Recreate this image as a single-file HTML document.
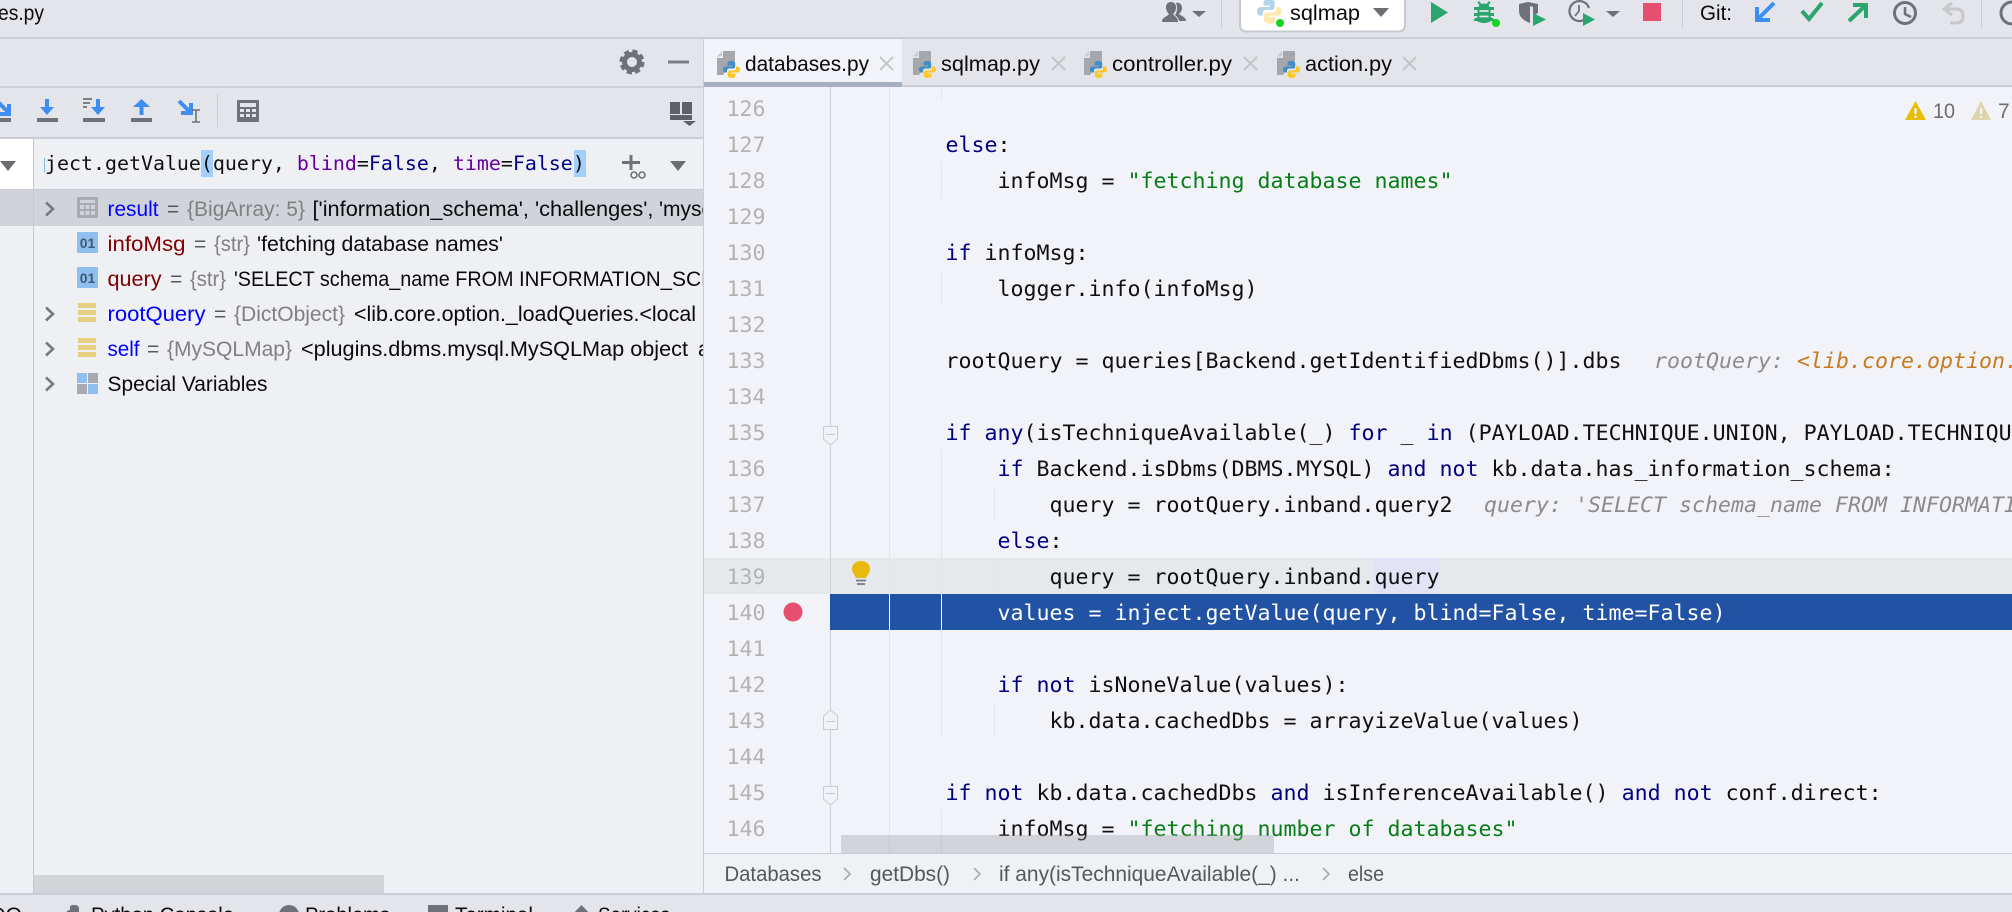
<!DOCTYPE html>
<html><head><meta charset="utf-8"><title>PyCharm</title>
<style>
html,body{margin:0;padding:0;width:2012px;height:912px;overflow:hidden;background:#e4e5ea}
svg{display:block}
text{white-space:pre}
.u{font-family:"Liberation Sans",sans-serif;font-size:21px;fill:#0a0a0a}
.c{font-family:"DejaVu Sans Mono","Liberation Mono",monospace;font-size:21.6px;fill:#101010}
.e{font-family:"DejaVu Sans Mono","Liberation Mono",monospace;font-size:19.93px;fill:#101010}
.n{font-family:"DejaVu Sans Mono","Liberation Mono",monospace;font-size:21.6px;fill:#b3b3b1}
.k{fill:#000080}.s{fill:#067d17}.p{fill:#660099}.h{font-style:italic;fill:#8c8c8c}.o{font-style:italic;fill:#c77a1d}
.g{fill:#808080}.b{fill:#0000ff}.r{fill:#7f0000}.d{fill:#55575c}.m{fill:#55575c;font-size:21px}
</style></head><body>
<svg width="2012" height="912" viewBox="0 0 2012 912" xmlns="http://www.w3.org/2000/svg">
<defs>
<clipPath id="cl"><rect x="0" y="0" width="703" height="912"/></clipPath>
<g id="py"><path fill="#3d8fc6" d="M8.5 0C5 0 4.5 1.2 4.5 2.5V4.5H9V5.5H2.5C1 5.5 0 6.8 0 8.5 0 10.2 1 11.5 2.5 11.5H4V9.8C4 8.5 5 7.5 6.3 7.5H10.2C11.4 7.5 12.2 6.6 12.2 5.5V2.5C12.2 1.2 11 0 8.5 0Z"/><path fill="#fdc727" d="M8.5 17C12 17 12.5 15.8 12.5 14.5V12.5H8V11.5H14.5C16 11.5 17 10.2 17 8.5 17 6.8 16 5.5 14.5 5.5H13V7.2C13 8.5 12 9.5 10.7 9.500H6.8C5.6 9.500 4.8 10.4 4.8 11.5V14.5C4.8 15.8 6 17 8.5 17Z"/></g>
<g id="tabicon"><path fill="#a5a7ac" d="M6 0H18V17H11L6 24H0V7H6Z"/><path fill="#c9cbcf" d="M0 5.5L5 0V5.5Z"/><use href="#py" x="6" y="10"/></g>
<g id="x"><path d="M1 1L14 14M14 1L1 14" stroke="#c3c5c9" stroke-width="2" fill="none"/></g>
<g id="chev"><path d="M0 -6.5L7 0L0 6.5" fill="none" stroke="#77797d" stroke-width="2.6"/></g>
<g id="stack" fill="#e8cf7f"><rect x="0" y="0" width="18" height="5"/><rect x="0" y="7" width="18" height="5"/><rect x="0" y="14" width="18" height="5"/></g>
<g id="bc"><path d="M0 -6L6 0L0 6" fill="none" stroke="#a9abaf" stroke-width="1.6"/></g>
</defs>

<!-- base -->
<rect width="2012" height="912" fill="#e4e5ea"/>
<rect x="0" y="138" width="704" height="756" fill="#eff0f4"/>
<rect x="704" y="87" width="1308" height="767" fill="#f2f3f8"/>
<rect x="704" y="854" width="1308" height="39" fill="#f0f1f5"/>

<!-- top bar -->
<text class="u" x="-2" y="20" textLength="46" lengthAdjust="spacingAndGlyphs">es.py</text>
<rect x="0" y="37" width="2012" height="2" fill="#c9ced6"/>
<path fill="#6e7278" d="M1176 3C1180 2 1182 5 1182 8C1182 11 1180 13 1179 14C1181 16 1186 17 1186 21H1179C1179 18 1176 16 1175 15C1177 12 1178 8 1176 3Z"/>
<path fill="#6e7278" d="M1162 22C1162 17 1167 17 1169 14C1167 12 1166 10 1166 7C1166 4 1168 2 1171 2C1174 2 1176 4 1176 7C1176 10 1175 12 1173 14C1175 17 1178 17 1178 22Z"/>
<path fill="#6e7278" d="M1192 11H1206L1199 17Z"/>
<rect x="1221" y="0" width="1" height="28" fill="#c9ced6"/>
<rect x="1240" y="-6" width="165" height="37.500" rx="6" fill="#fff" stroke="#c4c9d1" stroke-width="2"/>
<g transform="translate(1257 -1) scale(1.45)" opacity=".38"><use href="#py"/></g>
<circle cx="1280" cy="23" r="4" fill="#14d41d"/>
<text class="u" x="1290" y="20" textLength="70" lengthAdjust="spacingAndGlyphs">sqlmap</text>
<path fill="#6b6d71" d="M1373 8H1389L1381 17Z"/>
<path fill="#2aa56d" d="M1431 2L1448 12.500L1431 23Z"/>
<path fill="#2aa56d" d="M1479 1L1481.500 4Q1484 3 1486.500 4L1489 1L1490.500 2.500L1488.500 5.500L1490 7H1494V10H1490.500V13H1494V16H1490.500V17L1494 19V21H1491Q1488 23 1484 23Q1480 23 1477 21H1474V19L1477.500 17V16H1474V13H1477.500V10H1474V7H1478L1479.500 5.500L1477.500 2.500Z"/>
<path d="M1479.500 11H1488.500M1479.500 16.500H1488.500" stroke="#e4e5ea" stroke-width="1.800"/>
<circle cx="1496" cy="23" r="4" fill="#14d41d"/>
<path fill="#6e7278" d="M1519 4L1528 2L1538 4V13L1533 16V7L1530 6V23Q1519 19 1519 11Z"/>
<path fill="#2aa56d" d="M1533 13L1546 19.500L1533 26Z"/>
<path d="M1584 20A10 10 0 1 1 1589 8" fill="none" stroke="#6e7278" stroke-width="2.200"/>
<path d="M1579 5V11L1575 16" fill="none" stroke="#6e7278" stroke-width="1.800"/>
<path fill="#2aa56d" d="M1583 13L1595 19.500L1583 26Z"/>
<path fill="#6e7278" d="M1606 11H1620L1613 17Z"/>
<rect x="1643" y="3" width="18" height="18" fill="#e4506e"/>
<rect x="1682" y="0" width="1" height="28" fill="#c9ced6"/>
<text class="u" x="1700" y="20" textLength="32" lengthAdjust="spacingAndGlyphs">Git:</text>
<path d="M1774 3L1757 20M1757 7V20H1770" fill="none" stroke="#3d8ef0" stroke-width="4"/>
<path d="M1802 11L1809 19L1822 3" fill="none" stroke="#2aa56d" stroke-width="4"/>
<path d="M1849 21L1866 5M1853 5H1866V18" fill="none" stroke="#2aa56d" stroke-width="4"/>
<circle cx="1905" cy="13" r="10.500" fill="none" stroke="#6e7278" stroke-width="3"/>
<path d="M1905 7V14L1911 17" fill="none" stroke="#6e7278" stroke-width="2.600"/>
<path d="M1952 3L1944 9L1952 15M1945 9H1956Q1963 9 1963 16T1956 23H1950" fill="none" stroke="#c7c8ca" stroke-width="3"/>
<rect x="1981" y="0" width="1" height="28" fill="#c9ced6"/>
<circle cx="2012" cy="13" r="11" fill="none" stroke="#6e7278" stroke-width="3"/>

<!-- left panel header -->
<rect x="0" y="86" width="704" height="2" fill="#cbd0d6"/>
<g fill="#6e7278"><circle cx="632" cy="62" r="7.500" fill="none" stroke="#6e7278" stroke-width="5"/><circle cx="632" cy="62" r="10.500" fill="none" stroke="#6e7278" stroke-width="4" stroke-dasharray="5 3.250"/></g>
<rect x="668" y="60.500" width="21" height="3" fill="#7c7e84"/>

<!-- debugger toolbar -->
<path d="M-3 101L9 113M9 104V114H0" fill="none" stroke="#3d8ef0" stroke-width="4"/>
<rect x="0" y="118" width="11" height="4" fill="#6e7278"/>
<rect x="45" y="99" width="4" height="9" fill="#3d8ef0"/><path fill="#3d8ef0" d="M40 107H54L47 115Z"/><rect x="37" y="118" width="21" height="4" fill="#6e7278"/>
<path d="M83 99H92M83 103H90M83 107H87" stroke="#6e7278" stroke-width="1.800"/>
<rect x="96" y="99" width="4" height="9" fill="#3d8ef0"/><path fill="#3d8ef0" d="M91 107H105L98 115Z"/><rect x="83" y="118" width="22" height="4" fill="#6e7278"/>
<rect x="139.500" y="106" width="4" height="9" fill="#3d8ef0"/><path fill="#3d8ef0" d="M133 107H150L141.500 99Z"/><rect x="131" y="118" width="21" height="4" fill="#6e7278"/>
<path d="M179 101L191 113M191 103V113H181" fill="none" stroke="#3d8ef0" stroke-width="4"/>
<path d="M192 110H200M196 110V122M192 122H200" fill="none" stroke="#6e7278" stroke-width="1.600"/>
<rect x="217" y="94" width="1" height="33" fill="#c9ced6"/>
<rect x="237" y="100" width="22" height="22" rx="1" fill="#6e7278"/><rect x="240" y="103" width="16" height="4" fill="#e4e5ea"/>
<g fill="#e4e5ea"><rect x="240" y="109" width="4" height="3"/><rect x="246" y="109" width="4" height="3"/><rect x="252" y="109" width="4" height="3"/><rect x="240" y="114" width="4" height="3"/><rect x="246" y="114" width="4" height="3"/><rect x="252" y="114" width="4" height="3"/></g>
<g fill="#5d6066"><rect x="670" y="102" width="10" height="12"/><rect x="682" y="102" width="10" height="12"/><rect x="670" y="115" width="22" height="5"/><path d="M683 121H696L689.500 126Z"/></g>
<rect x="0" y="137" width="704" height="2" fill="#c9ced6"/>

<!-- watch row -->
<rect x="0" y="139" width="33" height="51" fill="#fff"/>
<path fill="#6b6d71" d="M0 161H16L8 171Z"/>
<rect x="33" y="139" width="1" height="754" fill="#c5c9cf"/>
<rect x="201" y="150" width="12" height="27" fill="#a4cffb"/><rect x="574" y="150" width="12" height="27" fill="#a4cffb"/>
<rect x="44" y="158" width="1" height="14" fill="#7fb9e8"/>
<text class="e" x="45" y="170">ject.getValue(query, <tspan class="p">blind</tspan>=<tspan fill="#000080">False</tspan>, <tspan class="p">time</tspan>=<tspan fill="#000080">False</tspan>)</text>
<path d="M631 155V170M622 162.500H640" stroke="#6e7278" stroke-width="3"/>
<circle cx="634" cy="175" r="3" fill="none" stroke="#6e7278" stroke-width="1.600"/><circle cx="642" cy="175" r="3" fill="none" stroke="#6e7278" stroke-width="1.600"/>
<path fill="#6b6d71" d="M670 161H686L678 171Z"/>
<rect x="0" y="189" width="704" height="2" fill="#c9ced6"/>

<!-- variables -->
<rect x="0" y="190" width="704" height="36" fill="#d0d4da"/>
<rect x="33" y="139" width="1" height="754" fill="#c5c9cf"/>
<g clip-path="url(#cl)">
<use href="#chev" x="46" y="209"/><use href="#chev" x="46" y="314"/><use href="#chev" x="46" y="349"/><use href="#chev" x="46" y="384"/>
<!-- result -->
<rect x="77" y="197" width="21" height="21" rx="1" fill="#a7aab0"/><rect x="80" y="200" width="15" height="3" fill="#d0d4da"/>
<g fill="#d0d4da"><rect x="80" y="205" width="4" height="4"/><rect x="85.500" y="205" width="4" height="4"/><rect x="91" y="205" width="4" height="4"/><rect x="80" y="211" width="4" height="4"/><rect x="85.500" y="211" width="4" height="4"/><rect x="91" y="211" width="4" height="4"/></g>
<text class="u b" x="107.500" y="216" textLength="51" lengthAdjust="spacingAndGlyphs">result</text>
<text class="u d" x="167" y="216">=</text>
<text class="u g" x="187" y="216" textLength="118" lengthAdjust="spacingAndGlyphs">{BigArray: 5}</text>
<text class="u" x="312.500" y="216" textLength="347" lengthAdjust="spacingAndGlyphs">['information_schema', 'challenges', </text>
<text class="u" x="659" y="216">'mysql'</text>
<!-- infoMsg -->
<rect x="77" y="232" width="21" height="21" rx="1" fill="#8fbfee"/>
<text x="87.500" y="248" text-anchor="middle" font-family="'Liberation Sans',sans-serif" font-weight="bold" font-size="14" fill="#3f5a73">01</text>
<text class="u r" x="107.500" y="251" textLength="78" lengthAdjust="spacingAndGlyphs">infoMsg</text>
<text class="u d" x="194" y="251">=</text>
<text class="u g" x="214" y="251" textLength="36" lengthAdjust="spacingAndGlyphs">{str}</text>
<text class="u" x="257" y="251" textLength="246" lengthAdjust="spacingAndGlyphs">'fetching database names'</text>
<!-- query -->
<rect x="77" y="267" width="21" height="21" rx="1" fill="#8fbfee"/>
<text x="87.500" y="283" text-anchor="middle" font-family="'Liberation Sans',sans-serif" font-weight="bold" font-size="14" fill="#3f5a73">01</text>
<text class="u r" x="107.500" y="286" textLength="54" lengthAdjust="spacingAndGlyphs">query</text>
<text class="u d" x="170" y="286">=</text>
<text class="u g" x="190" y="286" textLength="36" lengthAdjust="spacingAndGlyphs">{str}</text>
<text class="u" x="234" y="286" textLength="285" lengthAdjust="spacingAndGlyphs">'SELECT schema_name FROM </text>
<text class="u" x="519" y="286" textLength="153" lengthAdjust="spacingAndGlyphs">INFORMATION_</text>
<text class="u" x="672" y="286">SCHEMA</text>
<!-- rootQuery -->
<use href="#stack" x="78" y="303"/>
<text class="u b" x="107.500" y="321" textLength="98" lengthAdjust="spacingAndGlyphs">rootQuery</text>
<text class="u d" x="214" y="321">=</text>
<text class="u g" x="234" y="321" textLength="111" lengthAdjust="spacingAndGlyphs">{DictObject}</text>
<text class="u" x="354" y="321" textLength="342" lengthAdjust="spacingAndGlyphs">&lt;lib.core.option._loadQueries.&lt;local</text>
<!-- self -->
<use href="#stack" x="78" y="338"/>
<text class="u b" x="107.500" y="356" textLength="32" lengthAdjust="spacingAndGlyphs">self</text>
<text class="u d" x="147" y="356">=</text>
<text class="u g" x="167" y="356" textLength="125" lengthAdjust="spacingAndGlyphs">{MySQLMap}</text>
<text class="u" x="301" y="356" textLength="387" lengthAdjust="spacingAndGlyphs">&lt;plugins.dbms.mysql.MySQLMap object</text>
<text class="u" x="698" y="356">at</text>
<!-- special -->
<rect x="77" y="373" width="10" height="10" fill="#8fbfee"/><rect x="88" y="373" width="10" height="10" fill="#a7aab0"/><rect x="77" y="384" width="10" height="10" fill="#a7aab0"/><rect x="88" y="384" width="10" height="10" fill="#8fbfee"/>
<text class="u" x="107.500" y="391" textLength="160" lengthAdjust="spacingAndGlyphs">Special Variables</text>
</g>
<rect x="34" y="875" width="350" height="18" fill="#d3d4d8"/>

<!-- tabs -->
<rect x="703" y="39" width="1" height="854" fill="#c9ced6"/>
<rect x="704" y="39" width="198" height="43" fill="#f2f3f8"/>
<rect x="704" y="85" width="1308" height="2" fill="#c9ced6"/>
<rect x="704" y="82" width="198" height="5" fill="#a5afc0"/>
<use href="#tabicon" x="717" y="51"/><text class="u" x="745" y="71" textLength="124" lengthAdjust="spacingAndGlyphs">databases.py</text><use href="#x" x="879" y="56"/>
<use href="#tabicon" x="913" y="51"/><text class="u" x="941" y="71" textLength="99" lengthAdjust="spacingAndGlyphs">sqlmap.py</text><use href="#x" x="1051" y="56"/>
<use href="#tabicon" x="1084" y="51"/><text class="u" x="1112" y="71" textLength="120" lengthAdjust="spacingAndGlyphs">controller.py</text><use href="#x" x="1243" y="56"/>
<use href="#tabicon" x="1277" y="51"/><text class="u" x="1305" y="71" textLength="87" lengthAdjust="spacingAndGlyphs">action.py</text><use href="#x" x="1402" y="56"/>

<!-- editor rows -->
<rect x="704" y="558" width="1308" height="36" fill="#e6e9ec"/>
<rect x="1374" y="558" width="65" height="36" fill="#e3e3f8"/>
<rect x="830" y="594" width="1182" height="36" fill="#2152a3"/>

<!-- guides -->
<g fill="#e4e5e9">
<rect x="889" y="87" width="1" height="507"/><rect x="889" y="630" width="1" height="223"/>
<rect x="941" y="87" width="1" height="12"/><rect x="941" y="162" width="1" height="36"/><rect x="941" y="270" width="1" height="36"/><rect x="941" y="450" width="1" height="144"/><rect x="941" y="630" width="1" height="108"/><rect x="941" y="810" width="1" height="43"/>
<rect x="994" y="486" width="1" height="36"/><rect x="994" y="558" width="1" height="36"/><rect x="994" y="702" width="1" height="36"/>
</g>
<rect x="889" y="594" width="1" height="36" fill="#fff"/><rect x="941" y="594" width="1" height="36" fill="#fff"/>
<rect x="830" y="87" width="1" height="507" fill="#cdd0d5"/><rect x="830" y="630" width="1" height="223" fill="#cdd0d5"/>

<!-- line numbers -->
<text class="n" x="726.500" y="116">126</text><text class="n" x="726.500" y="152">127</text><text class="n" x="726.500" y="188">128</text><text class="n" x="726.500" y="224">129</text><text class="n" x="726.500" y="260">130</text><text class="n" x="726.500" y="296">131</text><text class="n" x="726.500" y="332">132</text><text class="n" x="726.500" y="368">133</text><text class="n" x="726.500" y="404">134</text><text class="n" x="726.500" y="440">135</text><text class="n" x="726.500" y="476">136</text><text class="n" x="726.500" y="512">137</text><text class="n" x="726.500" y="548">138</text><text class="n" x="726.500" y="584">139</text><text class="n" x="726.500" y="620">140</text><text class="n" x="726.500" y="656">141</text><text class="n" x="726.500" y="692">142</text><text class="n" x="726.500" y="728">143</text><text class="n" x="726.500" y="764">144</text><text class="n" x="726.500" y="800">145</text><text class="n" x="726.500" y="836">146</text>

<!-- gutter icons -->
<circle cx="793" cy="612" r="9.500" fill="#e6506e"/>
<path fill="#e8b90f" d="M861 561C856 561 852 564 852 569C852 573 855 575 856 578H866C867 575 870 573 870 569C870 564 866 561 861 561Z"/>
<path d="M856 580.500H866M857 584H865" stroke="#77797d" stroke-width="1.800"/>
<g fill="#f2f3f8" stroke="#c9cdd2" stroke-width="1">
<path d="M823.500 426.500H837.500V439L830.500 445L823.500 439Z"/>
<path d="M823.500 786.500H837.500V799L830.500 805L823.500 799Z"/>
<path d="M823.500 729.500H837.500V716L830.500 710L823.500 716Z"/>
</g>
<path d="M826 434.500H835M826 793.500H835M826 721.500H835" stroke="#c9cdd2" stroke-width="1"/>

<!-- code -->
<text class="c" x="945.500" y="152"><tspan class="k">else</tspan>:</text>
<text class="c" x="997.500" y="188">infoMsg = <tspan class="s">"fetching database names"</tspan></text>
<text class="c" x="945.500" y="260"><tspan class="k">if</tspan> infoMsg:</text>
<text class="c" x="997.500" y="296">logger.info(infoMsg)</text>
<text class="c" x="945.500" y="368">rootQuery = queries[Backend.getIdentifiedDbms()].dbs</text>
<text class="c h" x="1654" y="368">rootQuery: <tspan class="o">&lt;lib.core.option._loadQueries</tspan></text>
<text class="c" x="945.500" y="440"><tspan class="k">if any</tspan>(isTechniqueAvailable(_) <tspan class="k">for</tspan> _ <tspan class="k">in</tspan> (PAYLOAD.TECHNIQUE.UNION, PAYLOAD.TECHNIQUE.ERROR</text>
<text class="c" x="997.500" y="476"><tspan class="k">if</tspan> Backend.isDbms(DBMS.MYSQL) <tspan class="k">and not</tspan> kb.data.has_information_schema:</text>
<text class="c" x="1049.500" y="512">query = rootQuery.inband.query2</text>
<text class="c h" x="1484" y="512">query: 'SELECT schema_name FROM INFORMATION</text>
<text class="c" x="997.500" y="548"><tspan class="k">else</tspan>:</text>
<text class="c" x="1049.500" y="584">query = rootQuery.inband.query</text>
<text class="c" x="997.500" y="620" style="fill:#fff">values = inject.getValue(query, blind=False, time=False)</text>
<text class="c" x="997.500" y="692"><tspan class="k">if not</tspan> isNoneValue(values):</text>
<text class="c" x="1049.500" y="728">kb.data.cachedDbs = arrayizeValue(values)</text>
<text class="c" x="945.500" y="800"><tspan class="k">if not</tspan> kb.data.cachedDbs <tspan class="k">and</tspan> isInferenceAvailable() <tspan class="k">and not</tspan> conf.direct:</text>
<text class="c" x="997.500" y="836">infoMsg = <tspan class="s">"fetching number of databases"</tspan></text>

<!-- warnings -->
<path fill="#e8bf00" d="M1915.500 101L1926 120H1905Z"/><rect x="1914.300" y="108" width="2.400" height="6" fill="#f2f3f8"/><rect x="1914.300" y="115.500" width="2.400" height="2.400" fill="#f2f3f8"/>
<text class="u" x="1933" y="118" style="fill:#6e6e6e" textLength="22" lengthAdjust="spacingAndGlyphs">10</text>
<path fill="#dfd4ae" d="M1981 101L1991 120H1971Z"/><rect x="1979.800" y="108" width="2.400" height="6" fill="#f2f3f8"/><rect x="1979.800" y="115.500" width="2.400" height="2.400" fill="#f2f3f8"/>
<text class="u" style="fill:#6e6e6e" x="1998" y="118">7</text>

<!-- editor scrollbar -->
<rect x="841" y="835" width="433" height="18" fill="#a0a0a8" fill-opacity=".38"/>

<!-- breadcrumbs -->
<rect x="704" y="853" width="1308" height="1" fill="#c9ced6"/>
<text class="u m" x="724.500" y="881" textLength="97" lengthAdjust="spacingAndGlyphs">Databases</text><use href="#bc" x="844" y="874"/>
<text class="u m" x="870" y="881" textLength="80" lengthAdjust="spacingAndGlyphs">getDbs()</text><use href="#bc" x="974" y="874"/>
<text class="u m" x="999" y="881" textLength="301" lengthAdjust="spacingAndGlyphs">if any(isTechniqueAvailable(_) ...</text><use href="#bc" x="1323" y="874"/>
<text class="u m" x="1348" y="881" textLength="36" lengthAdjust="spacingAndGlyphs">else</text>

<!-- status bar -->
<rect x="0" y="893" width="2012" height="2" fill="#c9ced6"/>
<text class="u" x="22" y="922" text-anchor="end">TODO</text>
<path fill="#6e7278" d="M66 915Q66 910 70 910V907Q70 905 74 905Q79 905 79 908V915Z"/>
<text class="u" x="91" y="922" textLength="143" lengthAdjust="spacingAndGlyphs">Python Console</text>
<circle cx="289" cy="915" r="10" fill="#6e7278"/>
<text class="u" x="305" y="922" textLength="85" lengthAdjust="spacingAndGlyphs">Problems</text>
<rect x="428" y="905" width="20" height="14" fill="#6e7278"/>
<text class="u" x="455" y="922" textLength="78" lengthAdjust="spacingAndGlyphs">Terminal</text>
<path fill="#6e7278" d="M581.500 905L592 916H571Z"/>
<text class="u" x="598" y="922" textLength="72" lengthAdjust="spacingAndGlyphs">Services</text>
</svg>
</body></html>
